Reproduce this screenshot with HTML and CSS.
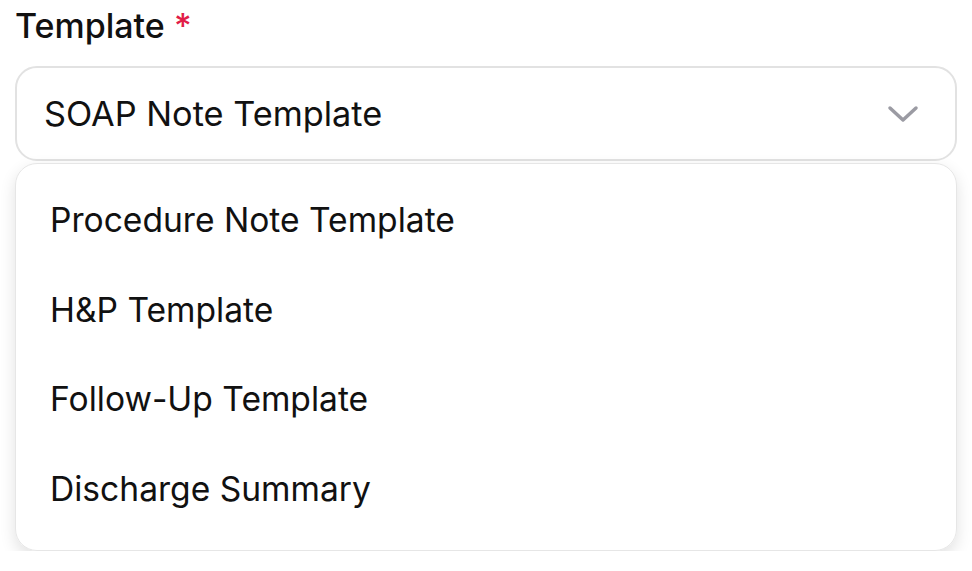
FILE: index.html
```html
<!DOCTYPE html>
<html lang="en">
<head>
  <meta charset="UTF-8" />
  <title>Template</title>
  <link rel="stylesheet" href="styles.css">
</head>
<body>

<div class="field">
  <label class="field-label">Template <span class="req">*</span></label>

  <div class="select">
    <span class="select-value">SOAP Note Template</span>
    <svg class="chevron" width="32" height="20" viewBox="0 0 32 20" fill="none">
      <path d="M3 4 L16 16 L29 4" stroke="#9b9ba3" stroke-width="3.5" stroke-linecap="round" stroke-linejoin="round"/>
    </svg>
  </div>

  <ul class="menu">
    <li class="menu-item">Procedure Note Template</li>
    <li class="menu-item">H&amp;P Template</li>
    <li class="menu-item">Follow-Up Template</li>
    <li class="menu-item">Discharge Summary</li>
  </ul>
</div>

</body>
</html>
```

FILE: styles.css
```css
body {
  margin: 0;
  background: #fff;
  font-family: Inter, 'Noto Sans', sans-serif;
  color: #111;
}
.field {
  padding: 4px 15px 0 15px;
}
.field-label {
  display: block;
  font-size: 34px;
  font-weight: 500;
  line-height: 44px;
  margin-bottom: 18px;
}
.req {
  color: #e11d48;
}
.select {
  display: flex;
  align-items: center;
  justify-content: space-between;
  height: 91px;
  padding: 0 36px 0 27px;
  border: 2px solid #e2e2e2;
  border-radius: 22px;
}
.select-value {
  font-size: 34.3px;
}
.menu {
  list-style: none;
  margin: 2px 0 0 0;
  padding: 11px 0 17px 0;
  border: 1px solid #e6e6e6;
  border-radius: 22px;
  box-shadow: 0 6px 16px rgba(0,0,0,0.12);
}
.menu-item {
  height: 89.5px;
  display: flex;
  align-items: center;
  padding-left: 34px;
  font-size: 33.6px;
}
```
